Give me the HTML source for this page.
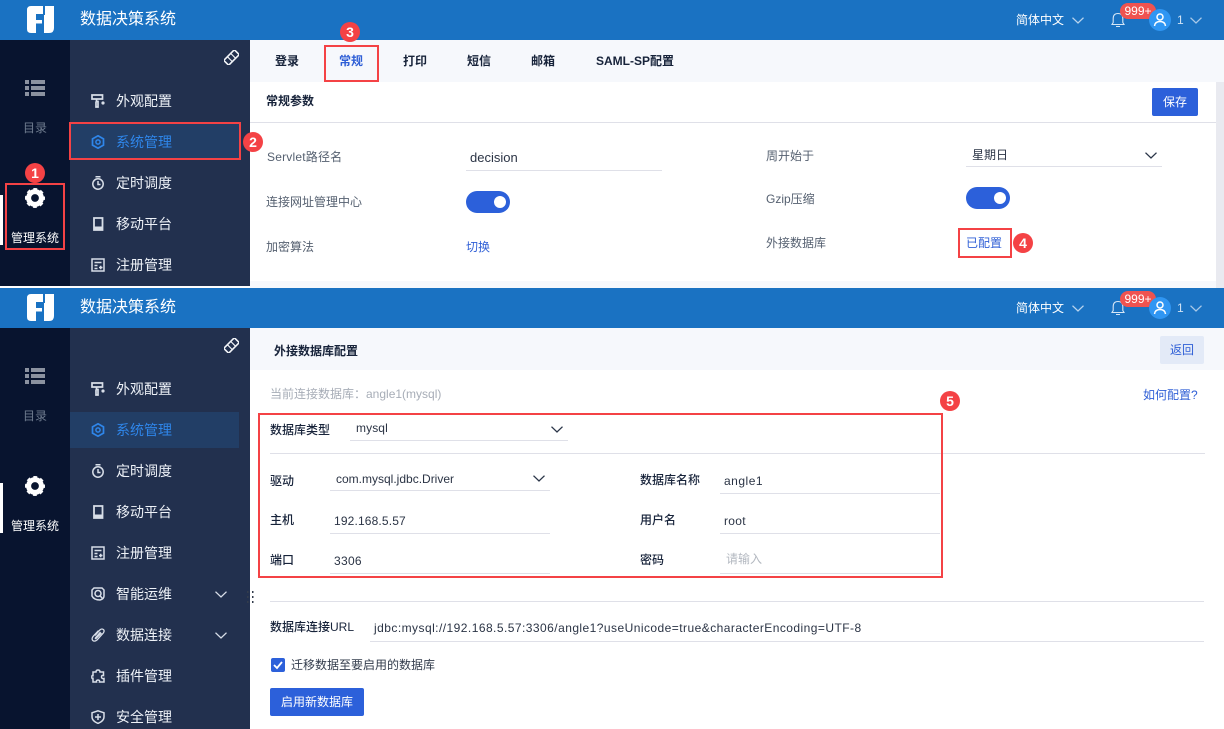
<!DOCTYPE html>
<html lang="zh-CN">
<head>
<meta charset="utf-8">
<title>数据决策系统</title>
<style>
html,body{margin:0;padding:0;background:#fff}
body{position:relative;width:1224px;height:729px;overflow:hidden;font-family:"Liberation Sans","Noto Sans CJK SC",sans-serif;font-size:12px;color:#333c4c}
div,span,svg{position:absolute}
.t{white-space:nowrap;line-height:20px}
.nav{font-size:14px;color:#eef2f8;left:116px}
.title{font-size:16px;color:#fff;left:80px}
.blue{color:#2f5fd6}
.lab{color:#556070}
.b{color:#17233a;font-weight:700}
.ln{height:1px;background:#dfe0e8}
.red{border:2px solid #f44245;box-sizing:border-box}
.bad{width:20px;height:20px;border-radius:50%;background:#f44245;color:#fff;font-size:14px;line-height:20px;text-align:center;font-weight:700}
.sw{left:466px;width:44px;height:22px;border-radius:11px;background:#2c60da}
.sw::after{content:"";position:absolute;right:4px;top:5px;width:12px;height:12px;border-radius:50%;background:#fff}
.val{color:#2b3445}
</style>
</head>
<body>
<svg width="0" height="0" style="left:0;top:0">
<defs>
<symbol id="logo" viewBox="0 0 27 27"><path fill="#fff" d="M0 4Q0 0 4 0H16V8H9V14H15V17.500H9V27H4Q0 27 0 23ZM18 0H27V22Q27 27 22 27H17V9H18Z"/></symbol>
<symbol id="gear" viewBox="0 0 20 20"><circle cx="10" cy="10" r="6.400" fill="none" stroke="currentColor" stroke-width="5"/><circle cx="10" cy="10" r="8.900" fill="none" stroke="currentColor" stroke-width="2.200" stroke-dasharray="3.800 3.190" stroke-dashoffset="1.900"/></symbol>
<symbol id="list" viewBox="0 0 20 16"><path fill="#8b92a0" d="M0 0h4v4H0zM6 0h14v4H6zM0 6h4v4H0zM6 6h14v4H6zM0 12h4v4H0zM6 12h14v4H6z"/></symbol>
<symbol id="pin" viewBox="0 0 16 16"><g fill="none" stroke="#f2f4f8" stroke-width="1.700" transform="rotate(45 8 8)"><rect x="4.300" y="0" width="7.400" height="16"/><path d="M4.300 5.500H11.700M4.300 10.500H11.700" stroke-width="1.200"/></g></symbol>
<symbol id="i1" viewBox="0 0 14 14"><path fill="none" stroke="currentColor" stroke-width="1.700" d="M1 1h10.500v4H1zM5.500 5V7.500H7V13H5V7.500"/><circle cx="12" cy="9" r="1.600" fill="currentColor"/></symbol>
<symbol id="i2" viewBox="0 0 14 14"><path fill="none" stroke="currentColor" stroke-width="1.700" d="M7 .8 12.500 3.900V10.100L7 13.200 1.500 10.100V3.900Z"/><circle cx="7" cy="7" r="2.100" fill="none" stroke="currentColor" stroke-width="1.500"/></symbol>
<symbol id="i3" viewBox="0 0 14 14"><circle cx="7" cy="8" r="5.200" fill="none" stroke="currentColor" stroke-width="1.500"/><path fill="none" stroke="currentColor" stroke-width="1.500" d="M4.500 .8h5M7 5v3.500h2.500"/></symbol>
<symbol id="i4" viewBox="0 0 14 14"><path fill="none" stroke="currentColor" stroke-width="1.800" d="M3 1h8.500v12H3z"/><path fill="currentColor" d="M3.500 9.500h7.500V13H3.500z"/></symbol>
<symbol id="i5" viewBox="0 0 14 14"><path fill="none" stroke="currentColor" stroke-width="1.500" d="M1 1h12v12H1zM3.500 4.500h7M3.500 7.500h3M3.500 10.500h3M8 9.500h3.500M9.700 7.700v3.500"/></symbol>
<symbol id="i6" viewBox="0 0 14 14"><path fill="none" stroke="currentColor" stroke-width="1.500" d="M3 1h8L13 3V9Q13 12 9 13 3 13 1 9V3Z"/><circle cx="7" cy="6.500" r="3" fill="none" stroke="currentColor" stroke-width="1.500"/><path stroke="currentColor" stroke-width="1.500" d="M8.800 8.500 11.500 11.500"/></symbol>
<symbol id="i7" viewBox="0 0 14 14"><path fill="none" stroke="currentColor" stroke-width="1.300" d="M4 7.500 9 1.800Q11 .3 12.500 1.600 13.800 3 12.300 5L6 12Q3.500 14 1.800 12.500.3 11 2 8.500L7.500 2.600M9.500 4 4.500 9.800Q4 11 5 10.500L10.500 5"/></symbol>
<symbol id="i8" viewBox="0 0 14 14"><path fill="none" stroke="currentColor" stroke-width="1.500" d="M5 3Q5 1 7 1 9 1 9 3H12.500V6.500Q10.500 6 10.500 8 10.500 10 13 9.500V13H8.500Q9 11 7 11 5 11 5.500 13H2V9.500Q.8 10 .8 8 .8 6 2 6.500V3Z"/></symbol>
<symbol id="i9" viewBox="0 0 14 14"><path fill="none" stroke="currentColor" stroke-width="1.500" d="M7 .8 13 2.800V7Q13 11 7 13.400 1 11 1 7V2.800Z"/><path fill="none" stroke="currentColor" stroke-width="1.500" d="M7 4v6M4 7h6"/></symbol>
<symbol id="cd" viewBox="0 0 12 7"><path fill="none" stroke="currentColor" stroke-width="1.300" d="M.5.700 6 6 11.500.700"/></symbol>
</defs>
</svg>

<!-- TOP PANEL -->
<div style="left:0;top:0;width:1224px;height:40px;background:#1a72c2"></div>
<svg style="left:27px;top:6px" width="27" height="27"><use href="#logo"/></svg>
<div class="t title" style="top:10px">数据决策系统</div>
<div class="t" style="left:1016px;top:10px;color:#fff">简体中文</div>
<svg style="left:1072px;top:17px;color:#b9d4ee" width="12" height="7"><use href="#cd"/></svg>
<svg style="left:1110px;top:12px" width="16" height="16" viewBox="0 0 16 16"><path fill="none" stroke="#d5e6f6" stroke-width="1.100" d="M2 12.500H14L12.800 10.500V6.500Q12.800 1.500 8 1.500 3.200 1.500 3.200 6.500V10.500ZM6 14.500H10"/></svg>
<div class="t" style="left:1120px;top:3px;width:36px;height:16px;border-radius:8px;background:#ef5350;color:#fff;line-height:16px;text-align:center">999+</div>
<div style="left:1149px;top:9px;width:22px;height:22px;border-radius:50%;background:#2f96f3"></div>
<svg style="left:1149px;top:9px" width="22" height="22" viewBox="0 0 22 22"><circle cx="11" cy="8" r="3" fill="none" stroke="#fff" stroke-width="1.500"/><path fill="none" stroke="#fff" stroke-width="1.500" d="M5.500 17Q6 12.500 11 12.500 16 12.500 16.500 17"/></svg>
<div class="t" style="left:1177px;top:10px;color:#cfe2f4">1</div>
<svg style="left:1190px;top:17px;color:#a9c9e8" width="12" height="7"><use href="#cd"/></svg>

<div style="left:0;top:40px;width:70px;height:246px;background:#08142f"></div>
<div style="left:70px;top:40px;width:180px;height:246px;background:#22304e"></div>
<div style="left:250px;top:40px;width:974px;height:42px;background:#f6f8fc"></div>
<div style="left:250px;top:281px;width:974px;height:7px;background:#f6f8fc"></div>
<div style="left:1216px;top:82px;width:8px;height:206px;background:#e9eaf0"></div>

<svg style="left:25px;top:80px" width="20" height="16"><use href="#list"/></svg>
<div class="t" style="left:23px;top:118px;color:#6f7c8f">目录</div>
<div style="left:0;top:195px;width:3px;height:50px;background:#fff"></div>
<svg style="left:25px;top:188px;color:#fff" width="20" height="20"><use href="#gear"/></svg>
<div class="t" style="left:11px;top:228px;color:#fff">管理系统</div>
<svg style="left:224px;top:50px" width="15" height="15"><use href="#pin"/></svg>

<div style="left:70px;top:124px;width:169px;height:36px;background:#223e66"></div>
<svg style="left:91px;top:94px;color:#d8dee8" width="14" height="14"><use href="#i1"/></svg>
<div class="t nav" style="top:91px">外观配置</div>
<svg style="left:91px;top:135px;color:#2f86ea" width="14" height="14"><use href="#i2"/></svg>
<div class="t nav" style="top:132px;color:#2f86ea">系统管理</div>
<svg style="left:91px;top:176px;color:#d8dee8" width="14" height="14"><use href="#i3"/></svg>
<div class="t nav" style="top:173px">定时调度</div>
<svg style="left:91px;top:217px;color:#d8dee8" width="14" height="14"><use href="#i4"/></svg>
<div class="t nav" style="top:214px">移动平台</div>
<svg style="left:91px;top:258px;color:#d8dee8" width="14" height="14"><use href="#i5"/></svg>
<div class="t nav" style="top:255px">注册管理</div>

<div class="t b" style="left:275px;top:51px">登录</div>
<div class="t" style="left:339px;top:51px;color:#2f5fd6;font-weight:700">常规</div>
<div class="t b" style="left:403px;top:51px">打印</div>
<div class="t b" style="left:467px;top:51px">短信</div>
<div class="t b" style="left:531px;top:51px">邮箱</div>
<div class="t b" style="left:596px;top:51px">SAML-SP配置</div>

<div class="t b" style="left:266px;top:91px">常规参数</div>
<div class="t" style="left:1152px;top:88px;width:46px;height:28px;background:#2c60da;border-radius:2px;color:#fff;line-height:28px;text-align:center">保存</div>
<div class="ln" style="left:250px;top:122px;width:966px"></div>

<div class="t lab" style="left:267px;top:147px;letter-spacing:.2px">Servlet路径名</div>
<div class="t val" style="left:470px;top:148px;font-size:13px">decision</div>
<div class="ln" style="left:466px;top:170px;width:196px"></div>
<div class="t lab" style="left:266px;top:192px">连接网址管理中心</div>
<div class="sw" style="top:191px"></div>
<div class="t lab" style="left:266px;top:237px">加密算法</div>
<div class="t blue" style="left:466px;top:237px">切换</div>

<div class="t lab" style="left:766px;top:146px">周开始于</div>
<div class="t val" style="left:972px;top:145px">星期日</div>
<svg style="left:1145px;top:152px;color:#2a3548" width="12" height="7"><use href="#cd"/></svg>
<div class="ln" style="left:966px;top:166px;width:196px"></div>
<div class="t lab" style="left:766px;top:189px">Gzip压缩</div>
<div class="sw" style="left:966px;top:187px"></div>
<div class="t lab" style="left:766px;top:233px">外接数据库</div>
<div class="t blue" style="left:966px;top:233px">已配置</div>

<!-- BOTTOM PANEL -->
<div style="left:0;top:288px;width:1224px;height:40px;background:#1a72c2"></div>
<svg style="left:27px;top:294px" width="27" height="27"><use href="#logo"/></svg>
<div class="t title" style="top:298px">数据决策系统</div>
<div class="t" style="left:1016px;top:298px;color:#fff">简体中文</div>
<svg style="left:1072px;top:305px;color:#b9d4ee" width="12" height="7"><use href="#cd"/></svg>
<svg style="left:1110px;top:300px" width="16" height="16" viewBox="0 0 16 16"><path fill="none" stroke="#d5e6f6" stroke-width="1.100" d="M2 12.500H14L12.800 10.500V6.500Q12.800 1.500 8 1.500 3.200 1.500 3.200 6.500V10.500ZM6 14.500H10"/></svg>
<div class="t" style="left:1120px;top:291px;width:36px;height:16px;border-radius:8px;background:#ef5350;color:#fff;line-height:16px;text-align:center">999+</div>
<div style="left:1149px;top:297px;width:22px;height:22px;border-radius:50%;background:#2f96f3"></div>
<svg style="left:1149px;top:297px" width="22" height="22" viewBox="0 0 22 22"><circle cx="11" cy="8" r="3" fill="none" stroke="#fff" stroke-width="1.500"/><path fill="none" stroke="#fff" stroke-width="1.500" d="M5.500 17Q6 12.500 11 12.500 16 12.500 16.500 17"/></svg>
<div class="t" style="left:1177px;top:298px;color:#cfe2f4">1</div>
<svg style="left:1190px;top:305px;color:#a9c9e8" width="12" height="7"><use href="#cd"/></svg>

<div style="left:0;top:328px;width:70px;height:401px;background:#08142f"></div>
<div style="left:70px;top:328px;width:180px;height:401px;background:#22304e"></div>
<div style="left:250px;top:328px;width:974px;height:42px;background:#f6f8fc"></div>

<svg style="left:25px;top:368px" width="20" height="16"><use href="#list"/></svg>
<div class="t" style="left:23px;top:406px;color:#6f7c8f">目录</div>
<div style="left:0;top:483px;width:3px;height:50px;background:#fff"></div>
<svg style="left:25px;top:476px;color:#fff" width="20" height="20"><use href="#gear"/></svg>
<div class="t" style="left:11px;top:516px;color:#fff">管理系统</div>
<svg style="left:224px;top:338px" width="15" height="15"><use href="#pin"/></svg>

<div style="left:70px;top:412px;width:169px;height:36px;background:#223e66"></div>
<svg style="left:91px;top:382px;color:#d8dee8" width="14" height="14"><use href="#i1"/></svg>
<div class="t nav" style="top:379px">外观配置</div>
<svg style="left:91px;top:423px;color:#2f86ea" width="14" height="14"><use href="#i2"/></svg>
<div class="t nav" style="top:420px;color:#2f86ea">系统管理</div>
<svg style="left:91px;top:464px;color:#d8dee8" width="14" height="14"><use href="#i3"/></svg>
<div class="t nav" style="top:461px">定时调度</div>
<svg style="left:91px;top:505px;color:#d8dee8" width="14" height="14"><use href="#i4"/></svg>
<div class="t nav" style="top:502px">移动平台</div>
<svg style="left:91px;top:546px;color:#d8dee8" width="14" height="14"><use href="#i5"/></svg>
<div class="t nav" style="top:543px">注册管理</div>
<svg style="left:91px;top:587px;color:#d8dee8" width="14" height="14"><use href="#i6"/></svg>
<div class="t nav" style="top:584px">智能运维</div>
<svg style="left:215px;top:591px;color:#d8dee8" width="12" height="7"><use href="#cd"/></svg>
<svg style="left:91px;top:628px;color:#d8dee8" width="14" height="14"><use href="#i7"/></svg>
<div class="t nav" style="top:625px">数据连接</div>
<svg style="left:215px;top:632px;color:#d8dee8" width="12" height="7"><use href="#cd"/></svg>
<svg style="left:91px;top:669px;color:#d8dee8" width="14" height="14"><use href="#i8"/></svg>
<div class="t nav" style="top:666px">插件管理</div>
<svg style="left:91px;top:710px;color:#d8dee8" width="14" height="14"><use href="#i9"/></svg>
<div class="t nav" style="top:707px">安全管理</div>
<svg style="left:247px;top:590px" width="8" height="14" viewBox="0 0 8 14"><path fill="#333c4c" d="M0 1h1.500v2H0zM5 1h1.500v2H5zM0 6h1.500v2H0zM5 6h1.500v2H5zM0 11h1.500v2H0zM5 11h1.500v2H5z"/></svg>

<div class="t b" style="left:274px;top:341px">外接数据库配置</div>
<div class="t" style="left:1160px;top:336px;width:44px;height:28px;background:#e3eaf7;border-radius:2px;color:#2f5fd6;line-height:28px;text-align:center">返回</div>
<div class="t" style="left:270px;top:384px;color:#a7adb7">当前连接数据库：angle1(mysql)</div>
<div class="t blue" style="left:1143px;top:385px">如何配置?</div>

<div class="t b" style="left:270px;top:420px;font-weight:500">数据库类型</div>
<div class="t val" style="left:356px;top:418px;letter-spacing:.1px">mysql</div>
<svg style="left:551px;top:426px;color:#2a3548" width="12" height="7"><use href="#cd"/></svg>
<div class="ln" style="left:350px;top:440px;width:218px"></div>
<div class="ln" style="left:270px;top:453px;width:935px"></div>

<div class="t b" style="left:270px;top:471px;font-weight:500">驱动</div>
<div class="t val" style="left:336px;top:469px">com.mysql.jdbc.Driver</div>
<svg style="left:533px;top:475px;color:#2a3548" width="12" height="7"><use href="#cd"/></svg>
<div class="ln" style="left:330px;top:490px;width:220px"></div>
<div class="t b" style="left:270px;top:510px;font-weight:500">主机</div>
<div class="t val" style="left:334px;top:511px;letter-spacing:.15px">192.168.5.57</div>
<div class="ln" style="left:330px;top:533px;width:220px"></div>
<div class="t b" style="left:270px;top:550px;font-weight:500">端口</div>
<div class="t val" style="left:334px;top:551px;letter-spacing:.3px">3306</div>
<div class="ln" style="left:330px;top:573px;width:220px"></div>

<div class="t b" style="left:640px;top:470px;font-weight:500">数据库名称</div>
<div class="t val" style="left:724px;top:471px;letter-spacing:.5px">angle1</div>
<div class="ln" style="left:720px;top:493px;width:220px"></div>
<div class="t b" style="left:640px;top:510px;font-weight:500">用户名</div>
<div class="t val" style="left:724px;top:511px;letter-spacing:.3px">root</div>
<div class="ln" style="left:720px;top:533px;width:220px"></div>
<div class="t b" style="left:640px;top:550px;font-weight:500">密码</div>
<div class="t" style="left:726px;top:549px;color:#b3b8c0">请输入</div>
<div class="ln" style="left:720px;top:573px;width:220px"></div>

<div class="ln" style="left:270px;top:601px;width:934px"></div>
<div class="t b" style="left:270px;top:617px;font-weight:500">数据库连接URL</div>
<div class="t val" style="left:374px;top:618px;letter-spacing:.45px">jdbc:mysql://192.168.5.57:3306/angle1?useUnicode=true&amp;characterEncoding=UTF-8</div>
<div class="ln" style="left:370px;top:641px;width:834px"></div>
<div style="left:271px;top:658px;width:14px;height:14px;background:#2c60da;border-radius:2px"></div>
<svg style="left:271px;top:658px" width="14" height="14" viewBox="0 0 14 14"><path fill="none" stroke="#fff" stroke-width="1.800" d="M3 7 6 10 11 4"/></svg>
<div class="t" style="left:291px;top:655px">迁移数据至要启用的数据库</div>
<div class="t" style="left:270px;top:688px;width:94px;height:28px;background:#2c60da;border-radius:2px;color:#fff;line-height:28px;text-align:center">启用新数据库</div>

<!-- Annotations -->
<div class="red" style="left:5px;top:183px;width:60px;height:67px"></div>
<div class="red" style="left:69px;top:122px;width:172px;height:38px"></div>
<div class="red" style="left:324px;top:45px;width:55px;height:37px"></div>
<div class="red" style="left:958px;top:228px;width:54px;height:30px"></div>
<div class="red" style="left:258px;top:413px;width:685px;height:165px"></div>
<div class="bad" style="left:25px;top:163px">1</div>
<div class="bad" style="left:243px;top:132px">2</div>
<div class="bad" style="left:340px;top:22px">3</div>
<div class="bad" style="left:1013px;top:233px">4</div>
<div class="bad" style="left:940px;top:391px">5</div>
</body>
</html>
